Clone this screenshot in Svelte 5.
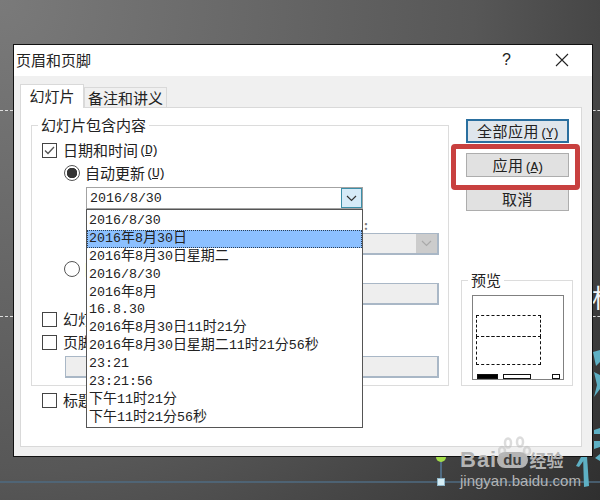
<script>
  const formats = [
    '2016/8/30', '2016年8月30日', '2016年8月30日星期二', '2016/8/30', '2016年8月', '16.8.30',
    '2016年8月30日11时21分', '2016年8月30日星期二11时21分56秒', '23:21', '23:21:56',
    '下午11时21分', '下午11时21分56秒'
  ];
  const selected = 1;
  const parts = (s) => s.match(/[\u4e00-\u9fff]+|[^\u4e00-\u9fff]+/g);
  const isCjk = (s) => /[\u4e00-\u9fff]/.test(s);
</script>

<div class="desktop">
  <i class="guide g1 left"></i>
  <i class="guide g1 right"></i>
  <i class="guide g2 left"></i>
  <i class="guide g2 right"></i>
  <span class="slide-char">标</span>
  <svg class="slide-art" width="600" height="500" viewBox="0 0 600 500">
    <path d="M0 482H600" stroke="#4f6b82" stroke-width="1.500" fill="none"/>
    <path d="M441 460V480" stroke="#4f6b82" stroke-width="2" fill="none"/>
    <path d="M436 457h10a5 5 0 0 1-10 0z" fill="#a4de4a"/>
    <rect x="437.500" y="478.500" width="7" height="7" fill="#d5edf5" stroke="#8fb6c8"/>
    <g fill="#5eb0c4">
      <path d="M593 352l7-2v12l-4 4z"/>
      <path d="M594 372l6 3v14l-6 8 3-12z"/>
      <path d="M594 430l6-2v6h-6zM594 441h6v6l-6 2z"/>
      <path d="M581 457l6-1-8 11-3-1z"/>
      <path d="M583 456h4l2 30-5 1z"/>
      <path d="M595 458l5-4v7z"/>
    </g>
  </svg>

  <div class="watermark">
    <svg class="paw" width="34" height="30" viewBox="0 0 34 30">
      <g fill="none" stroke="#bbb" stroke-width="2.500">
        <ellipse cx="10" cy="7" rx="3" ry="4.500"/>
        <ellipse cx="22" cy="6" rx="3" ry="4.500"/>
        <ellipse cx="4" cy="15" rx="3" ry="4"/>
        <ellipse cx="29" cy="15" rx="3" ry="4"/>
      </g>
    </svg>
    <div class="brand">
      <span class="bai">Bai</span><span class="du">du</span><span class="jy">经验</span>
    </div>
    <div class="url">jingyan.baidu.com</div>
  </div>

  <section class="dialog">
    <header class="titlebar">
      <span class="title">页眉和页脚</span>
      <span class="help">?</span>
      <svg class="close" width="14" height="14" viewBox="0 0 14 14">
        <path d="M1 1l12 12M13 1L1 13" stroke="#222" stroke-width="1.100" fill="none"/>
      </svg>
    </header>

    <nav class="tabs">
      <span class="tab active">幻灯片</span>
      <span class="tab">备注和讲义</span>
    </nav>

    <div class="panel">
      <div class="main">
        <div class="group content">
          <span class="legend">幻灯片包含内容</span>

          <label class="row r1">
            <span class="check on">
              <svg width="11" height="9" viewBox="0 0 11 9"><path d="M1 4.500l3 3 6-6.500" stroke="#555" stroke-width="1.300" fill="none"/></svg>
            </span>
            日期和时间<span class="key">(<u>D</u>)</span>
          </label>

          <label class="row radio-row">
            <span class="radio on"></span>
            自动更新<span class="key">(<u>U</u>)</span>
          </label>

          <div class="combo">
            <span class="combo-value">2016/8/30</span>
            <span class="combo-btn">
              <svg width="11" height="7" viewBox="0 0 11 7"><path d="M1 1l4.500 4.500L10 1" stroke="#333" stroke-width="1.200" fill="none"/></svg>
            </span>
            <ul class="list">
              {#each formats as f, i}
                <li class:sel={i === selected}>{#each parts(f) as p}<span class:cjk={isCjk(p)}>{p}</span>{/each}</li>
              {/each}
            </ul>
          </div>

          <div class="lang-label">语言(国家/地区)(L)<b>:</b></div>
          <div class="field select">
            <span class="select-btn">
              <svg width="11" height="7" viewBox="0 0 11 7"><path d="M1 1l4.500 4.500L10 1" stroke="#a9a9a9" stroke-width="1.200" fill="none"/></svg>
            </span>
          </div>

          <label class="row radio-row r2">
            <span class="radio"></span>
            固定<span class="key">(<u>X</u>)</span>
          </label>
          <div class="field wide"></div>

          <label class="row r3"><span class="check"></span>幻灯片编号<span class="key">(<u>N</u>)</span></label>
          <label class="row r4"><span class="check"></span>页脚<span class="key">(<u>F</u>)</span></label>
          <div class="field footer"></div>
        </div>
        <label class="row notitle"><span class="check"></span>标题幻灯片中不显示<span class="key">(<u>S</u>)</span></label>
      </div>

      <aside class="side">
        <div class="buttons">
          <button class="primary">全部应用<span class="key">(<u>Y</u>)</span></button>
          <button class="apply">应用<span class="key">(<u>A</u>)</span></button>
          <button>取消</button>
          <span class="highlight"></span>
        </div>

        <div class="group preview">
          <span class="legend">预览</span>
          <div class="sheet">
            <div class="dash top"></div>
            <div class="dash bottom"></div>
            <div class="marks">
              <i class="mark date"></i>
              <i class="mark foot"></i>
              <i class="mark num"></i>
            </div>
          </div>
        </div>
      </aside>
    </div>
  </section>
</div>

<style>
  :global(body) {
    margin: 0;
  }
  .desktop {
    position: relative;
    width: 600px;
    height: 500px;
    overflow: hidden;
    background: radial-gradient(circle 790px at 0 0, #7a7a7a 0, #575757 60%, #454545 77%, #2e2e2e 100%);
    font-family: "Noto Sans CJK SC", "Liberation Sans", sans-serif;
    font-size: 15px;
    color: #222;
  }
  .guide {
    position: absolute;
    height: 0;
    border-top: 1px dashed #ddd;
  }
  .guide.left { left: 0; width: 13px; }
  .guide.right { left: 593px; width: 7px; }
  .g1 { top: 110px; }
  .g2 { top: 316px; }
  .slide-char {
    position: absolute;
    left: 592px;
    top: 282px;
    font-size: 26px;
    line-height: 30px;
    color: #f4f4f4;
  }
  .slide-art {
    position: absolute;
    left: 0;
    top: 0;
  }
  .watermark {
    position: absolute;
    left: 460px;
    top: 436px;
    width: 120px;
    z-index: 3;
    color: #b4b4b4;
  }
  .paw {
    position: absolute;
    left: 38px;
    top: 0;
    opacity: 0.5;
  }
  .brand {
    display: flex;
    align-items: center;
    height: 20px;
    margin-top: 14px;
    line-height: 20px;
  }
  .bai {
    font: 700 22px/20px "Liberation Sans", sans-serif;
    letter-spacing: 1px;
  }
  .du {
    margin: 0 2px 0 0;
    padding: 0 6px;
    border-radius: 9px;
    background: #b4b4b4;
    color: #3f3f3f;
    font: 700 15px/16px "Liberation Sans", sans-serif;
  }
  .jy {
    font-size: 17px;
    font-weight: 700;
  }
  .url {
    margin-top: 3px;
    font: 15px/15px "Liberation Sans", sans-serif;
    white-space: nowrap;
  }

  .dialog {
    position: absolute;
    left: 13px;
    top: 44px;
    box-sizing: border-box;
    width: 580px;
    height: 413px;
    border: 1px solid #111;
    background: #f0f0f0;
  }
  .titlebar {
    display: flex;
    align-items: center;
    height: 31px;
    padding: 0 0 2px 2px;
    box-sizing: border-box;
    background: #fff;
  }
  .title {
    flex: 1;
  }
  .help {
    font: 16px "Liberation Sans", sans-serif;
    margin-right: 44px;
  }
  .close {
    margin-right: 23px;
  }
  .tabs {
    display: flex;
    align-items: flex-end;
    height: 31px;
    padding-left: 6px;
  }
  .tab {
    box-sizing: border-box;
    height: 20px;
    width: 83px;
    border: 1px solid #d9d9d9;
    border-bottom: 0;
    background: #f0f0f0;
    text-align: center;
    line-height: 19px;
  }
  .tab.active {
    position: relative;
    z-index: 1;
    width: 64px;
    height: 24px;
    margin-bottom: -1px;
    background: #fff;
    line-height: 21px;
  }
  .panel {
    display: grid;
    grid-template-columns: 418px 112px;
    gap: 12px;
    box-sizing: border-box;
    width: 562px;
    height: 340px;
    margin-left: 6px;
    padding: 17px 0 0 10px;
    border: 1px solid #d9d9d9;
    background: #fff;
  }
  .group {
    position: relative;
    box-sizing: border-box;
    border: 1px solid #dcdcdc;
  }
  .legend {
    position: absolute;
    left: 6px;
    top: -9px;
    padding: 0 3px;
    background: #fff;
    line-height: 16px;
  }
  .content {
    display: flex;
    flex-direction: column;
    height: 261px;
    padding: 15px 9px 0 10px;
  }
  .row {
    display: flex;
    align-items: center;
    height: 18px;
    line-height: 18px;
    white-space: nowrap;
  }
  .key {
    font: 13px "Liberation Mono", monospace;
    letter-spacing: -1.800px;
    margin-left: 1px;
  }
  .check {
    display: inline-flex;
    align-items: center;
    justify-content: center;
    box-sizing: border-box;
    width: 15px;
    height: 15px;
    margin-right: 6px;
    border: 1px solid #444;
    background: #fff;
  }
  .radio {
    box-sizing: border-box;
    width: 16px;
    height: 16px;
    margin-right: 5px;
    border: 1px solid #555;
    border-radius: 50%;
    background: #fff;
  }
  .radio.on {
    background: radial-gradient(circle, #333 0 5px, #fff 5.500px);
  }
  .radio-row {
    margin: 5px 0 0 22px;
  }
  .combo {
    position: relative;
    display: flex;
    align-items: center;
    box-sizing: border-box;
    width: 277px;
    height: 22px;
    margin: 5px 0 0 44px;
    border: 1px solid #a3a3a3;
    background: #fff;
  }
  .combo-value {
    flex: 1;
    padding-left: 3px;
    font: 13.300px "Liberation Mono", monospace;
  }
  .combo-btn {
    display: flex;
    align-items: center;
    justify-content: center;
    box-sizing: border-box;
    width: 21px;
    height: 20px;
    border: 1px solid #3c8fa8;
    background: #d6ebf8;
  }
  .list {
    position: absolute;
    z-index: 2;
    left: -1px;
    top: 21px;
    box-sizing: border-box;
    width: 277px;
    height: 219px;
    margin: 0;
    padding: 2px 0 0;
    list-style: none;
    border: 1px solid #555;
    background: #fff;
  }
  .list li {
    box-sizing: border-box;
    height: 17.900px;
    padding-left: 2px;
    font: 13.300px/17.900px "Liberation Mono", monospace;
    white-space: nowrap;
    overflow: hidden;
  }
  .list .cjk {
    font-family: "Noto Sans CJK SC", sans-serif;
    font-size: 14px;
    line-height: 0;
  }
  .list .sel {
    background: #8cc0ff;
    outline: 1px dotted #2b3f55;
    outline-offset: -1px;
  }
  .lang-label {
    height: 14px;
    margin-top: 9px;
    padding-right: 71px;
    font-size: 12px;
    line-height: 14px;
    text-align: right;
    white-space: nowrap;
    color: #777;
  }
  .lang-label b {
    margin-left: 3px;
  }
  .field {
    box-sizing: border-box;
    height: 22px;
    border: 2px solid #a9b7c6;
    border-width: 1px 2px 2px 1px;
    background: #eee;
  }
  .select {
    display: flex;
    justify-content: flex-end;
    width: 170px;
    margin: 1px 0 0 auto;
  }
  .select-btn {
    display: flex;
    align-items: center;
    justify-content: center;
    width: 21px;
    background: #ccc;
  }
  .r2 {
    margin-top: 5px;
  }
  .wide {
    margin: 5px 0 0 44px;
  }
  .r3, .r4 {
    margin-top: 5px;
  }
  .footer {
    margin: 5px 0 0 23px;
  }
  .notitle {
    margin: 5px 0 0 11px;
  }
  .side {
    display: flex;
    flex-direction: column;
    height: 261px;
  }
  .buttons {
    position: relative;
    display: flex;
    flex-direction: column;
    gap: 10px;
    width: 103px;
    margin: -6px 0 0 5px;
  }
  button {
    box-sizing: border-box;
    height: 24px;
    margin: 0;
    padding: 0;
    border: 1px solid #adadad;
    background: #e1e1e1;
    color: #222;
    font: 15px "Noto Sans CJK SC", sans-serif;
    line-height: 20px;
    letter-spacing: 0.5px;
  }
  .primary {
    border: 2px solid #2a6f9f;
    background: #dfe6ec;
  }
  .highlight {
    position: absolute;
    left: -15px;
    top: 25px;
    box-sizing: border-box;
    width: 129px;
    height: 46px;
    border: 5px solid #c8403f;
    border-radius: 4px;
  }
  .preview {
    height: 106px;
    margin-top: auto;
    padding: 14px 9px 0 10px;
  }
  .sheet {
    box-sizing: border-box;
    width: 92px;
    height: 85px;
    padding: 19px 3px 0;
    border: 1px solid #808080;
  }
  .dash {
    box-sizing: border-box;
    width: 65px;
    border: 1px dashed #111;
  }
  .dash.top {
    height: 22px;
  }
  .dash.bottom {
    height: 29px;
    margin-top: -1px;
  }
  .marks {
    display: flex;
    align-items: center;
    gap: 5px;
    margin: 9px 0 0 1px;
  }
  .mark {
    box-sizing: border-box;
    height: 5px;
    border: 1px solid #111;
  }
  .mark.date { width: 21px; background: #000; }
  .mark.foot { width: 29px; }
  .mark.num { width: 8px; margin-left: 16px; }
  u {
    text-underline-offset: 1px;
  }
</style>
